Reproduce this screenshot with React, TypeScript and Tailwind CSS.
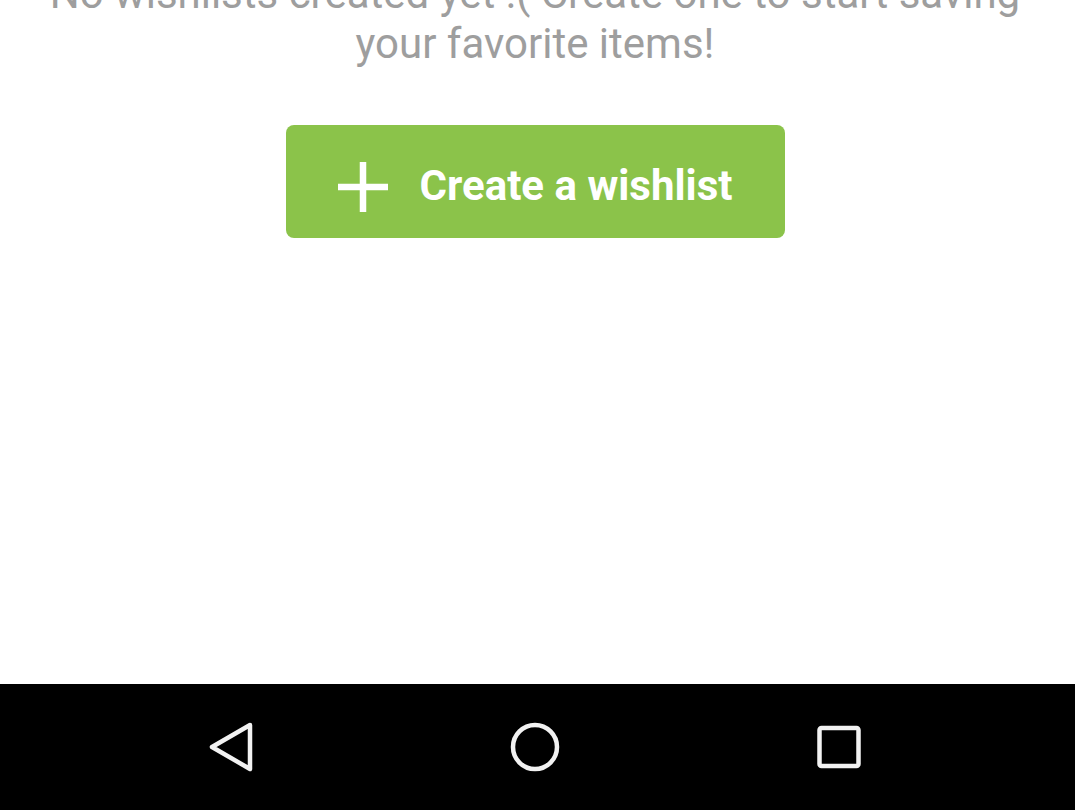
function PlusIcon() {
  return (
    <svg width="50" height="50" viewBox="0 0 50 50" className="shrink-0 mt-[2px]">
      <path d="M25 0 V50 M0 25 H50" stroke="#ffffff" strokeWidth="6.5" />
    </svg>
  )
}

function NavBar() {
  return (
    <div className="h-[126px] bg-black flex items-center justify-center gap-[244px] pr-[5px]">
      <svg width="60" height="60" viewBox="0 0 60 60" fill="none">
        <path d="M49 8 L11 30 L49 52 Z" stroke="#f2f2f2" strokeWidth="4.5" strokeLinejoin="round" />
      </svg>
      <svg width="60" height="60" viewBox="0 0 60 60" fill="none">
        <circle cx="30" cy="30" r="22" stroke="#f2f2f2" strokeWidth="4.5" />
      </svg>
      <svg width="60" height="60" viewBox="0 0 60 60" fill="none">
        <rect x="10.5" y="11" width="39" height="38" rx="2" stroke="#f2f2f2" strokeWidth="4.5" />
      </svg>
    </div>
  )
}

export default function App() {
  return (
    <div className="h-[810px] w-full flex flex-col overflow-hidden bg-white" style={{ fontFamily: 'Roboto, "Liberation Sans", sans-serif' }}>
      <main className="flex-1 flex flex-col items-center pr-[5px]">
        <p className="mt-[-31px] text-[42px] leading-[50px] text-[#9e9e9e] text-center max-w-[1000px]">
          No wishlists created yet :( Create one to start saving your favorite items!
        </p>
        <button className="mt-[56px] w-[499px] h-[113px] bg-[#8bc34a] rounded-[8px] flex items-center justify-center gap-[32px] pt-[8px] text-white">
          <PlusIcon />
          <span className="text-[42px] font-bold leading-none">Create a wishlist</span>
        </button>
      </main>
      <NavBar />
    </div>
  )
}
